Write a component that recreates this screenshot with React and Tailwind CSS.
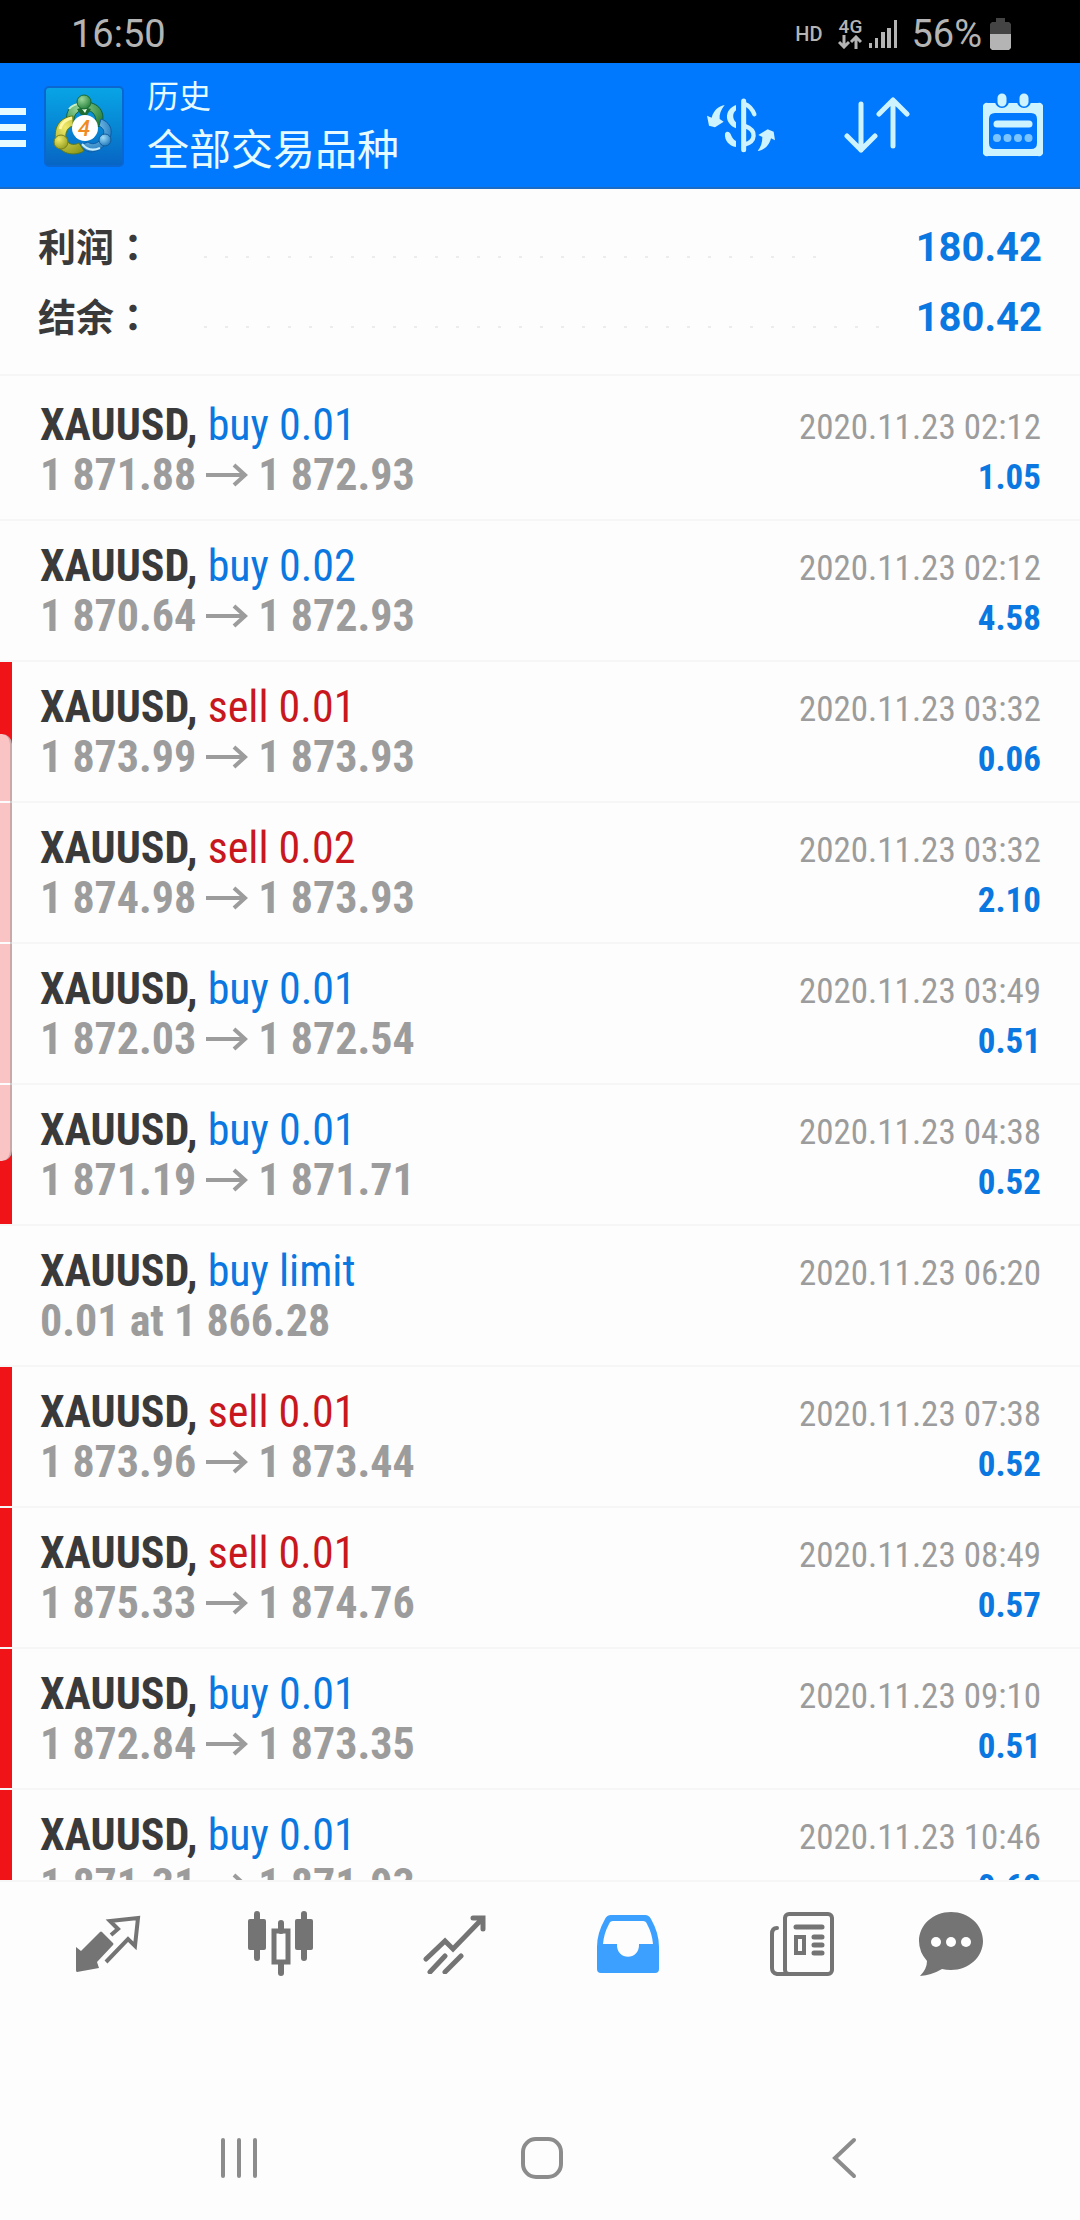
import { clsx } from 'clsx';

const TRADES = [
    { side: 'buy', label: 'buy 0.01', from: '1 871.88', to: '1 872.93', time: '2020.11.23 02:12', profit: '1.05' },
    { side: 'buy', label: 'buy 0.02', from: '1 870.64', to: '1 872.93', time: '2020.11.23 02:12', profit: '4.58' },
    { side: 'sell', label: 'sell 0.01', from: '1 873.99', to: '1 873.93', time: '2020.11.23 03:32', profit: '0.06', marked: true },
    { side: 'sell', label: 'sell 0.02', from: '1 874.98', to: '1 873.93', time: '2020.11.23 03:32', profit: '2.10', marked: true },
    { side: 'buy', label: 'buy 0.01', from: '1 872.03', to: '1 872.54', time: '2020.11.23 03:49', profit: '0.51', marked: true },
    { side: 'buy', label: 'buy 0.01', from: '1 871.19', to: '1 871.71', time: '2020.11.23 04:38', profit: '0.52', marked: true },
    { side: 'buy', label: 'buy limit', note: '0.01 at 1 866.28', time: '2020.11.23 06:20' },
    { side: 'sell', label: 'sell 0.01', from: '1 873.96', to: '1 873.44', time: '2020.11.23 07:38', profit: '0.52', marked: true },
    { side: 'sell', label: 'sell 0.01', from: '1 875.33', to: '1 874.76', time: '2020.11.23 08:49', profit: '0.57', marked: true },
    { side: 'buy', label: 'buy 0.01', from: '1 872.84', to: '1 873.35', time: '2020.11.23 09:10', profit: '0.51', marked: true },
    { side: 'buy', label: 'buy 0.01', from: '1 871.31', to: '1 871.93', time: '2020.11.23 10:46', profit: '0.62', marked: true },
];

const SUMMARY = [
    { label: '利润', value: '180.42', dots: 30 },
    { label: '结余', value: '180.42', dots: 33 },
];

function StatusBar() {
    return (
        <div className="flex h-[63px] shrink-0 items-center bg-black pl-[71px] pr-[69px] pt-[4px] text-[#b4b4b4]">
            <span className="text-[38px] leading-none">16:50</span>
            <span className="ml-auto text-[20px] font-medium leading-none">HD</span>
            <div className="ml-[16px] flex flex-col items-center">
                <span className="text-[19px] font-medium leading-[17px]">4G</span>
                <svg width="24" height="14" viewBox="0 0 24 14" fill="none" stroke="currentColor" strokeWidth="3">
                    <path d="M6 0v11M1 7l5 5 5-5M18 14V3M13 7l5-5 5 5" />
                </svg>
            </div>
            <svg className="ml-[7px]" width="29" height="28" viewBox="0 0 29 28" fill="currentColor">
                <path d="M0 23h3v5H0zM6 18h3v10H6zM12 12h4v16h-4zM18 8h4v20h-4zM25 0h3v28h-3z" />
            </svg>
            <span className="ml-[13px] text-[38px] leading-none">56%</span>
            <svg className="ml-[8px]" width="21" height="32" viewBox="0 0 21 32">
                <path d="M6 0h9v4h4l2 2v10H0V6l2-2h4z" fill="#444" />
                <path d="M0 16h21v14l-2 2H2l-2-2z" fill="#b4b4b4" />
            </svg>
        </div>
    );
}

function AppLogo() {
    return (
        <svg width="82" height="82" viewBox="-1 -1 82 82">
            <defs>
                <linearGradient id="tile" x1="0" y1="0" x2="0" y2="1">
                    <stop offset="0" stopColor="#08a5e6" />
                    <stop offset="0.5" stopColor="#0787d4" />
                    <stop offset="1" stopColor="#0764c4" />
                </linearGradient>
                <radialGradient id="green" cx="0.35" cy="0.3" r="0.8">
                    <stop offset="0" stopColor="#9ad79a" />
                    <stop offset="1" stopColor="#1c7a34" />
                </radialGradient>
                <radialGradient id="gold" cx="0.35" cy="0.3" r="0.8">
                    <stop offset="0" stopColor="#f1ea6a" />
                    <stop offset="1" stopColor="#8f9a1c" />
                </radialGradient>
                <radialGradient id="sky" cx="0.35" cy="0.3" r="0.8">
                    <stop offset="0" stopColor="#9fdcf7" />
                    <stop offset="1" stopColor="#1470b8" />
                </radialGradient>
            </defs>
            <rect x="1" y="0" width="78" height="79" rx="4" fill="url(#tile)" stroke="#0a66d0" strokeWidth="2" />
            {/* Three figures around the badge */}
            <path d="M24 38C19 24 28 15 41 15s22 10 16 24l-6 1c3-9-1-17-10-17s-13 7-10 15z" fill="url(#green)" stroke="#0f5f3c" />
            <path d="M25 22c4-5 9-6 16-5" fill="none" stroke="#c9f0c4" strokeWidth="2" />
            <path d="M33 22l7-2 7 2-4 6h-6z" fill="#1c6e34" />
            <path d="M38 22h5l-2 4z" fill="#e8ffe8" />
            <path d="M57 32c12 4 14 17 3 27-9 8-18 8-24-1l8-3c4 3 9 2 13-3 4-6 4-10-2-13z" fill="url(#sky)" stroke="#0c5ca8" />
            <path d="M29 29C15 30 9 42 12 54c3 13 18 16 28 10l-5-8c-6 3-12 1-13-5s2-11 7-12z" fill="url(#gold)" stroke="#5a7a1c" />
            <path d="M16 42c2-7 6-10 12-11" fill="none" stroke="#fff6a0" strokeWidth="3" />
            <path d="M38 57c5 6 11 7 18 4" fill="none" stroke="#c6ecff" strokeWidth="2" />
            <circle cx="40" cy="15" r="7" fill="url(#green)" stroke="#176a35" />
            <circle cx="17" cy="55" r="7" fill="url(#gold)" stroke="#77801c" />
            <circle cx="61" cy="53" r="6" fill="url(#sky)" stroke="#125c9c" />
            <circle cx="41" cy="41" r="13" fill="#fff" />
            <text x="40" y="49" textAnchor="middle" className="text-[22px] font-medium italic" fill="#f08a24">4</text>
        </svg>
    );
}

function Header() {
    return (
        <header className="flex h-[126px] shrink-0 items-center border-b-2 border-[#1a6cc4] bg-[#0079fe] pr-[37px] pt-[4px] text-[#e6fbff]">
            <button aria-label="Menu" className="flex w-[26px] flex-col gap-[9px]">
                <span className="h-[7px] bg-current" />
                <span className="h-[7px] bg-current" />
                <span className="h-[7px] bg-current" />
            </button>
            <div className="ml-[17px]">
                <AppLogo />
            </div>
            <div className="ml-[22px]">
                <p className="text-[32px] leading-[48px]">历史</p>
                <h1 className="text-[42px] leading-[60px]">全部交易品种</h1>
            </div>
            <div className="ml-auto flex items-center pb-[4px]">
                <button aria-label="Currency">
                    <svg width="72" height="56" viewBox="132 288 216 168" fill="none" stroke="#cdf3ff" strokeLinecap="round">
                        <path d="M248 300V446" strokeWidth="15" />
                        <path d="M250 308C264 313 274 324 280 340M254 376C288 388 284 422 252 430" strokeWidth="13" />
                        <path d="M225 312V328C214 336 214 354 225 364V382C190 368 188 326 225 312zM192 398C196 388 208 392 210 402C214 412 220 418 225 420V438C204 434 190 418 192 398z" fill="#cdf3ff" stroke="none" />
                        <path d="M191 312C176 314 158 326 152 350L138 344L144 374L162 379L188 362L176 354C174 340 180 326 191 312z" fill="#cdf3ff" stroke="none" />
                        <path d="M290 450C308 448 324 436 330 412L342 418L338 392L320 385L292 402L304 408C304 424 300 438 290 450z" fill="#cdf3ff" stroke="none" />
                    </svg>
                </button>
                <button aria-label="Sort" className="ml-[67px]">
                    <svg width="66" height="58" viewBox="0 0 66 58" fill="none" stroke="#cdf3ff" strokeWidth="5" strokeLinecap="round" strokeLinejoin="round">
                        <path d="M17 8V54M3 40L17 54L31 40M49 50V4M35 18L49 4L63 18" />
                    </svg>
                </button>
                <button aria-label="Period" className="ml-[73px]">
                    <svg width="60" height="64" viewBox="0 0 60 64" fill="none">
                        <path d="M5 10H55a4 4 0 0 1 5 5V58a4 4 0 0 1-5 5H5a4 4 0 0 1-5-5V15a4 4 0 0 1 5-5zM12 20q-6 0-6 6V50q0 6 6 6H48q6 0 6-6V26q0-6-6-6z" fill="#cdf3ff" fillRule="evenodd" />
                        <path d="M19 6V8M41 6V8" stroke="#0079fe" strokeWidth="14" strokeLinecap="round" />
                        <path d="M19 5V9M41 5V9" stroke="#cdf3ff" strokeWidth="9" strokeLinecap="round" />
                        <path d="M14 31H46" stroke="#cdf3ff" strokeWidth="7" strokeLinecap="round" />
                        <path d="M14 45H47" stroke="#7cc4ff" strokeWidth="8" strokeLinecap="round" strokeDasharray="0 10.5" />
                    </svg>
                </button>
            </div>
        </header>
    );
}

function SummaryRow({ label, value, dots }) {
    return (
        <div className="flex h-[70px] items-center">
            <dt className="w-[166px] text-[38px] font-bold leading-none text-[#3a3a3a]">
                {label}
                <span className="font-['Noto_Sans_CJK_TC',sans-serif]">：</span>
            </dt>
            <div className="mt-[22px] flex gap-[18px]">
                {Array.from({ length: dots }, (_, i) => (
                    <span key={i} className="h-[2px] w-[3px] bg-[#ececec]" />
                ))}
            </div>
            <dd className="ml-auto pt-[3px] text-[40px] font-bold leading-none text-[#0a78e0]">{value}</dd>
        </div>
    );
}

function Arrow() {
    return (
        <svg className="mx-[10px]" width="42" height="24" viewBox="0 0 42 24" fill="none" stroke="currentColor" strokeWidth="4">
            <path d="M0 12H39M28 2L39 12L28 22" />
        </svg>
    );
}

function TradeRow({ trade }) {
    return (
        <li className="flex h-[141px] shrink-0 border-b-2 border-[#f6f6f6]">
            <span className={clsx('w-[12px] shrink-0', trade.marked && 'bg-[#f01418]')} />
            <div className="flex flex-1 justify-between pl-[28px] pr-[39px] pt-[20px] font-['Roboto_Condensed','Liberation_Sans_Narrow',Roboto,sans-serif]">
                <div className="text-[44px] leading-[50px]">
                    <p>
                        <span className="font-bold text-[#3a3a3a]">XAUUSD,</span>{' '}
                        <span className={trade.side === 'buy' ? 'text-[#0a78e0]' : 'text-[#c8181e]'}>{trade.label}</span>
                    </p>
                    <p className="flex items-center font-bold text-[#9c9c9c]">
                        {trade.note || (
                            <>
                                {trade.from}
                                <Arrow />
                                {trade.to}
                            </>
                        )}
                    </p>
                </div>
                <div className="pt-[3px] text-right text-[35px] leading-[50px]">
                    <p className="text-[#9c9c9c]">{trade.time}</p>
                    <p className="font-bold text-[#0a78e0]">{trade.profit}</p>
                </div>
            </div>
        </li>
    );
}

function TabBar() {
    return (
        <nav className="flex h-[126px] shrink-0 items-center border-t-2 border-[#f6f6f6] pl-[21px] pr-[66px] text-[#747474]">
            <button aria-label="Quotes" className="flex flex-[173] justify-center">
                <svg width="66" height="60" viewBox="0 0 66 60">
                    <path d="M27 18L38 29Q39 30 38 31L22 48L24 54L2 58Q1 58 1 56V33L6 37L25 18Q26 17 27 18z" fill="currentColor" />
                    <path d="M36 21L43 15L35 7L63 4L60 32L53 25L31 48" fill="none" stroke="currentColor" strokeWidth="4" />
                </svg>
            </button>
            <button aria-label="Charts" className="flex flex-[173] justify-center">
                <svg width="66" height="66" viewBox="0 0 66 66" fill="none" stroke="currentColor" strokeWidth="5" strokeLinecap="round">
                    <path d="M9 3V47M56 3V47M33 12V20M33 53V62" strokeWidth="6" />
                    <rect x="0" y="8" width="18" height="31" rx="2" fill="currentColor" stroke="none" />
                    <rect x="47" y="8" width="18" height="31" rx="2" fill="currentColor" stroke="none" />
                    <rect x="26" y="20" width="14" height="31" />
                </svg>
            </button>
            <button aria-label="Trade" className="flex flex-[173] justify-center">
                <svg width="64" height="60" viewBox="0 0 64 60" fill="none" stroke="currentColor" strokeWidth="5" strokeLinecap="round">
                    <path d="M3 45L22 27L30 35L59 5M50 4H60V15M7 58L22 42M22 58L38 42" />
                </svg>
            </button>
            <button aria-label="History" className="flex flex-[173] justify-center text-[#3ba0ff]">
                <svg width="64" height="58" viewBox="0 0 64 58" fill="currentColor">
                    <path d="M15 0H49Q53 0 55 4Q63 18 63 32V54Q63 58 59 58H5Q1 58 1 54V32Q1 18 9 4Q11 0 15 0zM17 6Q14 6 13 9Q8 18 7 29H21C20 46 44 46 43 29H57Q56 18 51 9Q50 6 47 6z" fillRule="evenodd" />
                </svg>
            </button>
            <button aria-label="News" className="flex flex-[173] justify-center">
                <svg width="66" height="64" viewBox="0 0 66 64" fill="none" stroke="currentColor" strokeWidth="4" strokeLinecap="round">
                    <rect x="16" y="2" width="47" height="60" rx="4" />
                    <path d="M8 16Q3 16 3 22V56Q3 61 8 62H20" />
                    <path d="M27 15H53" strokeWidth="5" />
                    <path d="M45 25H53M45 33H53M45 41H53" strokeWidth="5" />
                    <rect x="27" y="25" width="8" height="16" />
                </svg>
            </button>
            <button aria-label="Chat" className="flex flex-[125] justify-center">
                <svg width="66" height="64" viewBox="0 0 66 64" fill="currentColor">
                    <path d="M33 0C51 0 65 13 65 29S51 58 33 58Q28 58 24 57Q14 63 2 64Q9 57 9 49Q1 40 1 29C1 13 15 0 33 0z" />
                    <g fill="#fff">
                        <circle cx="18" cy="30" r="5" />
                        <circle cx="33" cy="30" r="5" />
                        <circle cx="48" cy="30" r="5" />
                    </g>
                </svg>
            </button>
        </nav>
    );
}

function SystemNav() {
    return (
        <div className="mt-[88px] grid h-[126px] shrink-0 grid-cols-3 items-center justify-items-center pl-[87px] pr-[84px] pt-[2px] text-[#8c8c8c]">
            <button aria-label="Recent apps">
                <svg width="40" height="42" viewBox="0 0 40 42" fill="none" stroke="currentColor" strokeWidth="4" strokeLinecap="round">
                    <path d="M4 3V39M20 3V39M36 3V39" />
                </svg>
            </button>
            <button aria-label="Home">
                <svg width="44" height="44" viewBox="0 0 44 44" fill="none" stroke="currentColor" strokeWidth="4">
                    <rect x="3" y="3" width="38" height="38" rx="13" />
                </svg>
            </button>
            <button aria-label="Back">
                <svg width="26" height="42" viewBox="0 0 26 42" fill="none" stroke="currentColor" strokeWidth="4" strokeLinecap="round">
                    <path d="M22 3L3 21L22 39" />
                </svg>
            </button>
        </div>
    );
}

export default function App() {
    return (
        <div className="flex h-screen flex-col overflow-hidden bg-[#fdfdfd] font-[Roboto,'Noto_Sans_CJK_SC',sans-serif]">
            <StatusBar />
            <Header />
            <main className="relative flex min-h-0 flex-1 flex-col overflow-hidden">
                <dl className="shrink-0 border-b-2 border-[#f6f6f6] px-[38px] pb-[23px] pt-[22px]">
                    {SUMMARY.map((row) => (
                        <SummaryRow key={row.label} {...row} />
                    ))}
                </dl>
                <ul className="flex flex-col pt-[4px]">
                    {TRADES.map((trade, i) => (
                        <TradeRow key={i} trade={trade} />
                    ))}
                </ul>
                {/* Edge panel handle */}
                <div className="absolute left-0 top-[545px] h-[427px] w-[12px] rounded-r-[10px] border-r-2 border-[#808080]/40 bg-[#fdfdfd]/75" />
            </main>
            <TabBar />
            <SystemNav />
        </div>
    );
}
